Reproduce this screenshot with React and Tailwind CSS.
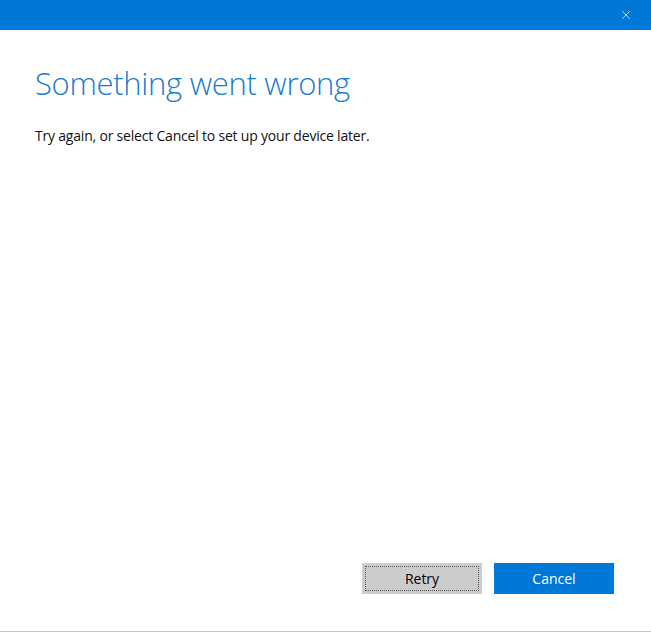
import { X } from 'lucide-react'

export default function App() {
  return (
    <div className="h-[632px] w-[651px] flex flex-col bg-white border-b border-[#c8c8c8]" style={{ fontFamily: '"Open Sans", "Noto Sans", sans-serif' }}>
      {/* Title bar */}
      <div className="h-[30px] shrink-0 bg-[#0078d7] flex items-center justify-end pr-[18px]">
        <X className="h-[14px] w-[14px] text-white" strokeWidth={1.2} />
      </div>

      {/* Body */}
      <div className="flex-1 px-[35px] pt-[33px]">
        <h1 className="text-[31px] leading-[40px] font-light text-[#1a7ccd] tracking-[-0.3px]">
          Something went wrong
        </h1>
        <p className="mt-[23px] text-[14px] leading-[20px] text-[#111] tracking-[-0.2px]">
          Try again, or select Cancel to set up your device later.
        </p>
      </div>

      {/* Buttons */}
      <div className="flex justify-end gap-[12px] pr-[37px] pb-[37px]">
        <button className="h-[31px] w-[120px] bg-[#cccccc] p-[3px] text-[14px] text-black">
          <span className="flex h-full w-full items-center justify-center border border-dotted border-[#555]">
            Retry
          </span>
        </button>
        <button className="h-[31px] w-[120px] bg-[#0078d7] text-[14px] text-white">
          Cancel
        </button>
      </div>
    </div>
  )
}
